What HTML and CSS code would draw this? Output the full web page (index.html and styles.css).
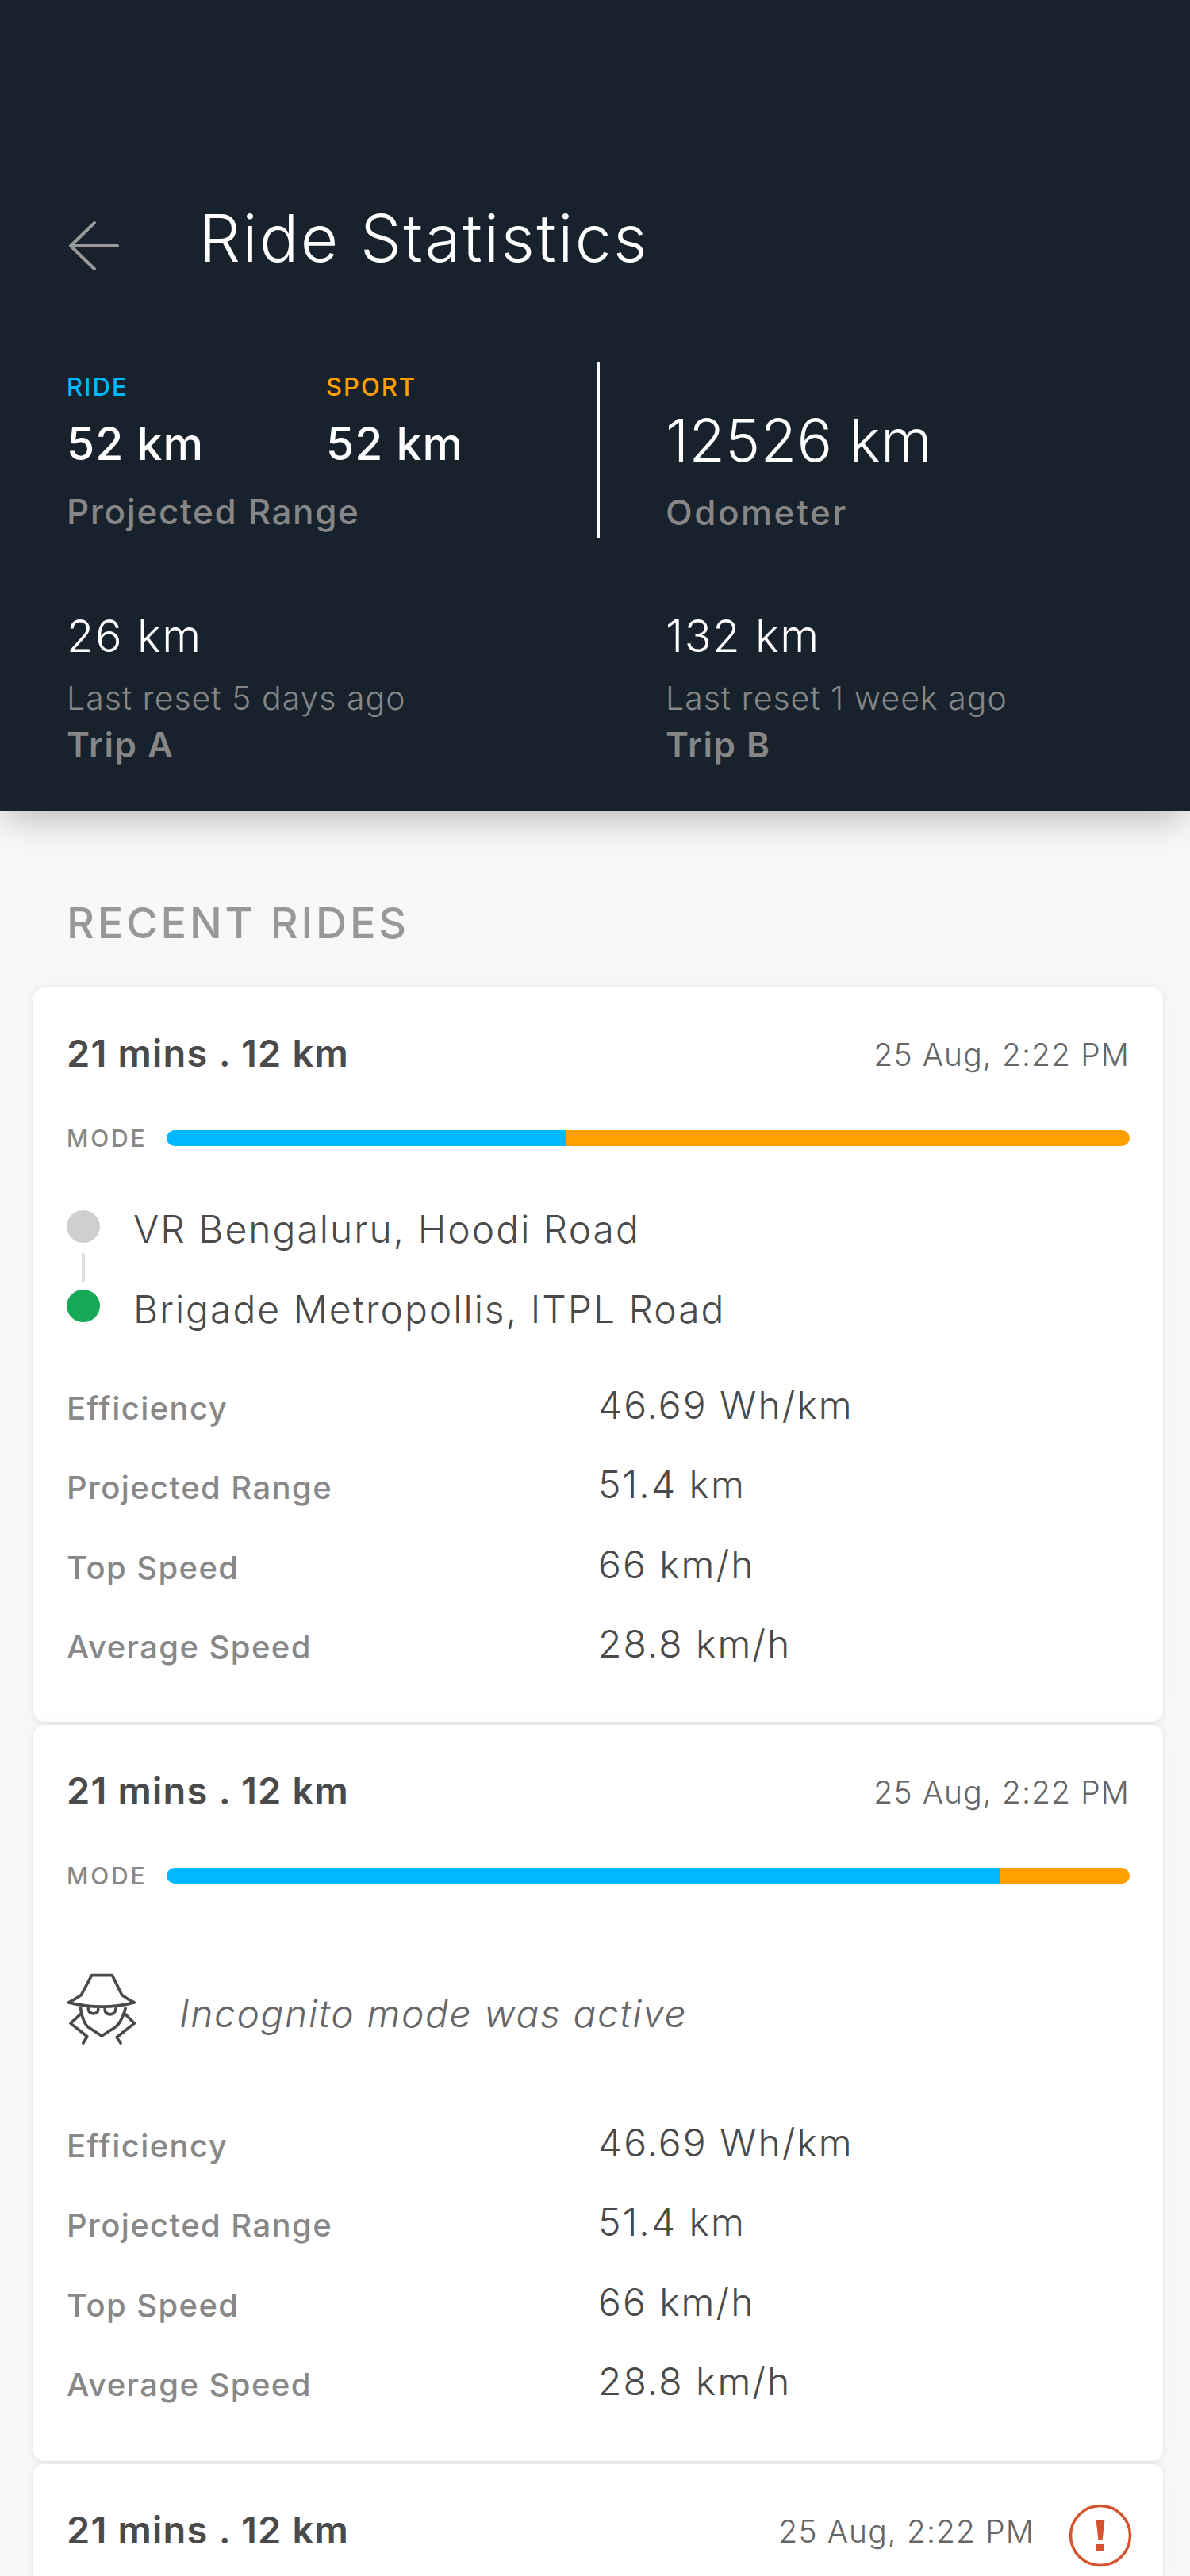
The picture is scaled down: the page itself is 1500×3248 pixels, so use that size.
FILE: index.html
```html
<!DOCTYPE html>
<html lang="en">
<head>
<meta charset="UTF-8">
<meta name="viewport" content="width=device-width, initial-scale=1.0">
<title>Ride Statistics</title>
<link rel="stylesheet" href="styles.css">
</head>
<body>

<header class="top">
    <div class="top-bar">
        <svg class="back" viewBox="0 0 64 64" fill="none" stroke="#999" stroke-width="4" stroke-linecap="round" stroke-linejoin="round">
            <path d="M62 32H3M33 3L3 32L33 61"/>
        </svg>
        <h1>Ride Statistics</h1>
    </div>

    <div class="summary">
        <div class="range">
            <div class="modes">
                <div class="mode-col">
                    <div class="mode-name ride">RIDE</div>
                    <div class="mode-km">52 km</div>
                </div>
                <div class="mode-col">
                    <div class="mode-name sport">SPORT</div>
                    <div class="mode-km">52 km</div>
                </div>
            </div>
            <div class="top-label">Projected Range</div>
        </div>
        <div class="odo">
            <div class="odo-km">12526 km</div>
            <div class="top-label">Odometer</div>
        </div>
        <div class="trip">
            <div class="trip-km">26 km</div>
            <div class="trip-reset">Last reset 5 days ago</div>
            <div class="trip-name">Trip A</div>
        </div>
        <div class="trip">
            <div class="trip-km">132 km</div>
            <div class="trip-reset">Last reset 1 week ago</div>
            <div class="trip-name">Trip B</div>
        </div>
    </div>
</header>

<h2 class="recent">RECENT RIDES</h2>

<div class="cards">
    <div class="card">
        <div class="card-head">
            <div class="card-title">21 mins . 12 km</div>
            <div class="card-date">25 Aug, 2:22 PM</div>
        </div>
        <div class="mode-row">
            <span class="mode-label">MODE</span>
            <div class="bar"><div class="bar-ride" style="width: 41.5%"></div><div class="bar-sport"></div></div>
        </div>
        <div class="route">
            <div class="route-dots">
                <span class="dot dot-start"></span>
                <span class="dot-line"></span>
                <span class="dot dot-end"></span>
            </div>
            <div class="route-names">
                <div>VR Bengaluru, Hoodi Road</div>
                <div>Brigade Metropollis, ITPL Road</div>
            </div>
        </div>
        <div class="stats">
            <div class="stat-label">Efficiency</div><div class="stat-value">46.69 Wh/km</div>
            <div class="stat-label">Projected Range</div><div class="stat-value">51.4 km</div>
            <div class="stat-label">Top Speed</div><div class="stat-value">66 km/h</div>
            <div class="stat-label">Average Speed</div><div class="stat-value">28.8 km/h</div>
        </div>
    </div>

    <div class="card">
        <div class="card-head">
            <div class="card-title">21 mins . 12 km</div>
            <div class="card-date">25 Aug, 2:22 PM</div>
        </div>
        <div class="mode-row">
            <span class="mode-label">MODE</span>
            <div class="bar"><div class="bar-ride" style="width: 86.6%"></div><div class="bar-sport"></div></div>
        </div>
        <div class="incognito">
            <svg class="spy" viewBox="135 200 265 275" fill="none" stroke="#4a4a4a" stroke-width="11" stroke-linecap="round" stroke-linejoin="round">
                <path d="M230 210H308L345 285Q365 300 392 313Q270 345 142 313Q170 300 190 285Z"/>
                <path d="M217 335Q218 355 237 355Q255 355 255 337M280 337Q280 358 300 358Q320 358 322 335"/>
                <path d="M188 335Q195 385 215 405L268 440L322 405Q345 385 358 335"/>
                <path d="M190 355L150 392L213 442L198 467M355 355L392 392L325 445L340 467"/>
            </svg>
            <span class="incognito-text">Incognito mode was active</span>
        </div>
        <div class="stats">
            <div class="stat-label">Efficiency</div><div class="stat-value">46.69 Wh/km</div>
            <div class="stat-label">Projected Range</div><div class="stat-value">51.4 km</div>
            <div class="stat-label">Top Speed</div><div class="stat-value">66 km/h</div>
            <div class="stat-label">Average Speed</div><div class="stat-value">28.8 km/h</div>
        </div>
    </div>

    <div class="card">
        <div class="card-head">
            <div class="card-title">21 mins . 12 km</div>
            <div class="card-date">25 Aug, 2:22 PM</div>
            <svg class="warn" viewBox="0 0 80 80">
                <circle cx="40" cy="40" r="37.5" fill="none" stroke="#d6532f" stroke-width="3.5"/>
                <path d="M34.5 20H45.5L42.5 46H37.5Z" fill="#d6532f"/>
                <rect x="35" y="51" width="10" height="9" fill="#d6532f"/>
            </svg>
        </div>
    </div>
</div>

</body>
</html>
```

FILE: styles.css
```css
html {
    overflow: hidden;
}
body {
    margin: 0;
    width: 1500px;
    height: 3248px;
    overflow: hidden;
    background-color: #f8f8f9;
    font-family: Inter, "Liberation Sans", sans-serif;
}
h1, h2 {
    margin: 0;
    font-weight: normal;
}

/* dark header */
.top {
    position: relative;
    height: 1023px;
    padding-top: 240px;
    box-sizing: border-box;
    background-color: #18222c;
    color: #fff;
    box-shadow: 0 16px 44px -8px rgba(0, 0, 0, 0.28);
}
.top-bar {
    display: flex;
    align-items: center;
    height: 120px;
    padding-left: 86px;
}
.back {
    width: 64px;
    height: 64px;
    margin-top: 20px;
}
.top-bar h1 {
    margin: 2px 0 0 101px;
    font-size: 82px;
    line-height: 120px;
    font-weight: 300;
    letter-spacing: 2.4px;
}
.summary {
    display: grid;
    grid-template-columns: 755px 1fr;
    padding: 97px 0 0 84px;
}
.range {
    height: 221px;
    box-sizing: border-box;
    width: 672px;
    padding-top: 11px;
    border-right: 4px solid #fff;
}
.modes {
    display: flex;
}
.mode-col {
    width: 327px;
}
.mode-name {
    font-size: 31px;
    line-height: 40px;
    font-weight: 500;
    letter-spacing: 2px;
}
.ride {
    color: #00b8ff;
}
.sport {
    color: #ff9f00;
}
.mode-km {
    margin-top: 22px;
    font-size: 57px;
    line-height: 60px;
    font-weight: 500;
    letter-spacing: 1px;
}
.top-label {
    margin-top: 30px;
    font-size: 44px;
    line-height: 50px;
    font-weight: 500;
    letter-spacing: 1.6px;
    color: #868686;
}
.odo {
    padding-top: 62px;
}
.odo-km {
    font-size: 74px;
    line-height: 72px;
    font-weight: 300;
    letter-spacing: 0.4px;
}
.odo .top-label {
    margin-top: 30px;
    letter-spacing: 2.5px;
}
.trip {
    padding-top: 94px;
}
.trip-km {
    font-size: 56px;
    line-height: 60px;
    font-weight: 300;
    letter-spacing: 1.7px;
}
.trip-reset {
    margin-top: 23px;
    font-size: 41px;
    line-height: 50px;
    font-weight: 300;
    letter-spacing: 1px;
    color: #868686;
}
.trip-name {
    margin-top: 9px;
    font-size: 44px;
    line-height: 50px;
    font-weight: 600;
    letter-spacing: 1.5px;
    color: #868686;
}

.recent {
    margin-top: 111px;
    padding-left: 84px;
    font-size: 54px;
    line-height: 60px;
    font-weight: 500;
    letter-spacing: 3.8px;
    color: #989898;
}

/* ride cards */
.cards {
    display: flex;
    flex-direction: column;
    gap: 4px;
    margin: 51px 34px 0 42px;
}
.card {
    padding: 53px 42px 48px;
    border-radius: 14px;
    background-color: #fff;
    box-shadow: 0 1px 6px rgba(0, 0, 0, 0.08), 0 0 30px rgba(0, 0, 0, 0.03);
}
.card-head {
    display: flex;
    align-items: center;
    height: 60px;
}
.card-title {
    font-size: 47px;
    line-height: 60px;
    font-weight: 600;
    letter-spacing: 1.2px;
    color: #4a4a4a;
}
.card-date {
    margin: 3px 0 0 auto;
    font-size: 39px;
    font-weight: 300;
    letter-spacing: 1.1px;
    color: #666;
}
.warn {
    flex: none;
    width: 80px;
    height: 80px;
    margin: 14px -3px 0 43px;
}
.mode-row {
    display: flex;
    align-items: center;
    height: 40px;
    margin-top: 57px;
}
.mode-label {
    width: 126px;
    font-size: 30px;
    font-weight: 500;
    letter-spacing: 2.8px;
    color: #888;
}
.bar {
    display: flex;
    flex: 1;
    height: 20px;
    border-radius: 10px;
    overflow: hidden;
}
.bar-ride {
    background-color: #00b8ff;
}
.bar-sport {
    flex: 1;
    background-color: #ff9f00;
}

.route {
    display: flex;
    margin-top: 65px;
}
.route-dots {
    display: flex;
    flex-direction: column;
    align-items: center;
    width: 42px;
    padding-top: 6px;
}
.dot {
    width: 42px;
    height: 41px;
    border-radius: 50%;
}
.dot-start {
    background-color: #cfcfcf;
}
.dot-end {
    background-color: #17a957;
}
.dot-line {
    width: 4px;
    height: 37px;
    margin: 13px 0 9px;
    border-radius: 2px;
    background-color: #ddd;
}
.route-names {
    display: flex;
    flex-direction: column;
    gap: 41px;
    margin-left: 42px;
    font-size: 48px;
    line-height: 60px;
    font-weight: 300;
    letter-spacing: 2px;
    color: #4a4a4a;
}

.incognito {
    display: flex;
    margin: 104px 0 73px;
    height: 89px;
}
.spy {
    width: 88px;
    height: 92px;
    margin-top: -2px;
}
.incognito-text {
    margin: 20px 0 0 54px;
    font-size: 48px;
    line-height: 60px;
    font-style: italic;
    font-weight: 300;
    letter-spacing: 1.6px;
    color: #666;
}

.stats {
    display: grid;
    grid-template-columns: 670px 1fr;
    grid-auto-rows: 100.5px;
    align-items: center;
    margin-top: 40px;
}
.incognito + .stats {
    margin-top: 0;
    margin-bottom: 2px;
}
.stat-label {
    padding-top: 8px;
    font-size: 40px;
    font-weight: 500;
    letter-spacing: 1.4px;
    color: #888;
}
.stat-value {
    font-size: 48px;
    font-weight: 300;
    letter-spacing: 2px;
    color: #4a4a4a;
}
```
